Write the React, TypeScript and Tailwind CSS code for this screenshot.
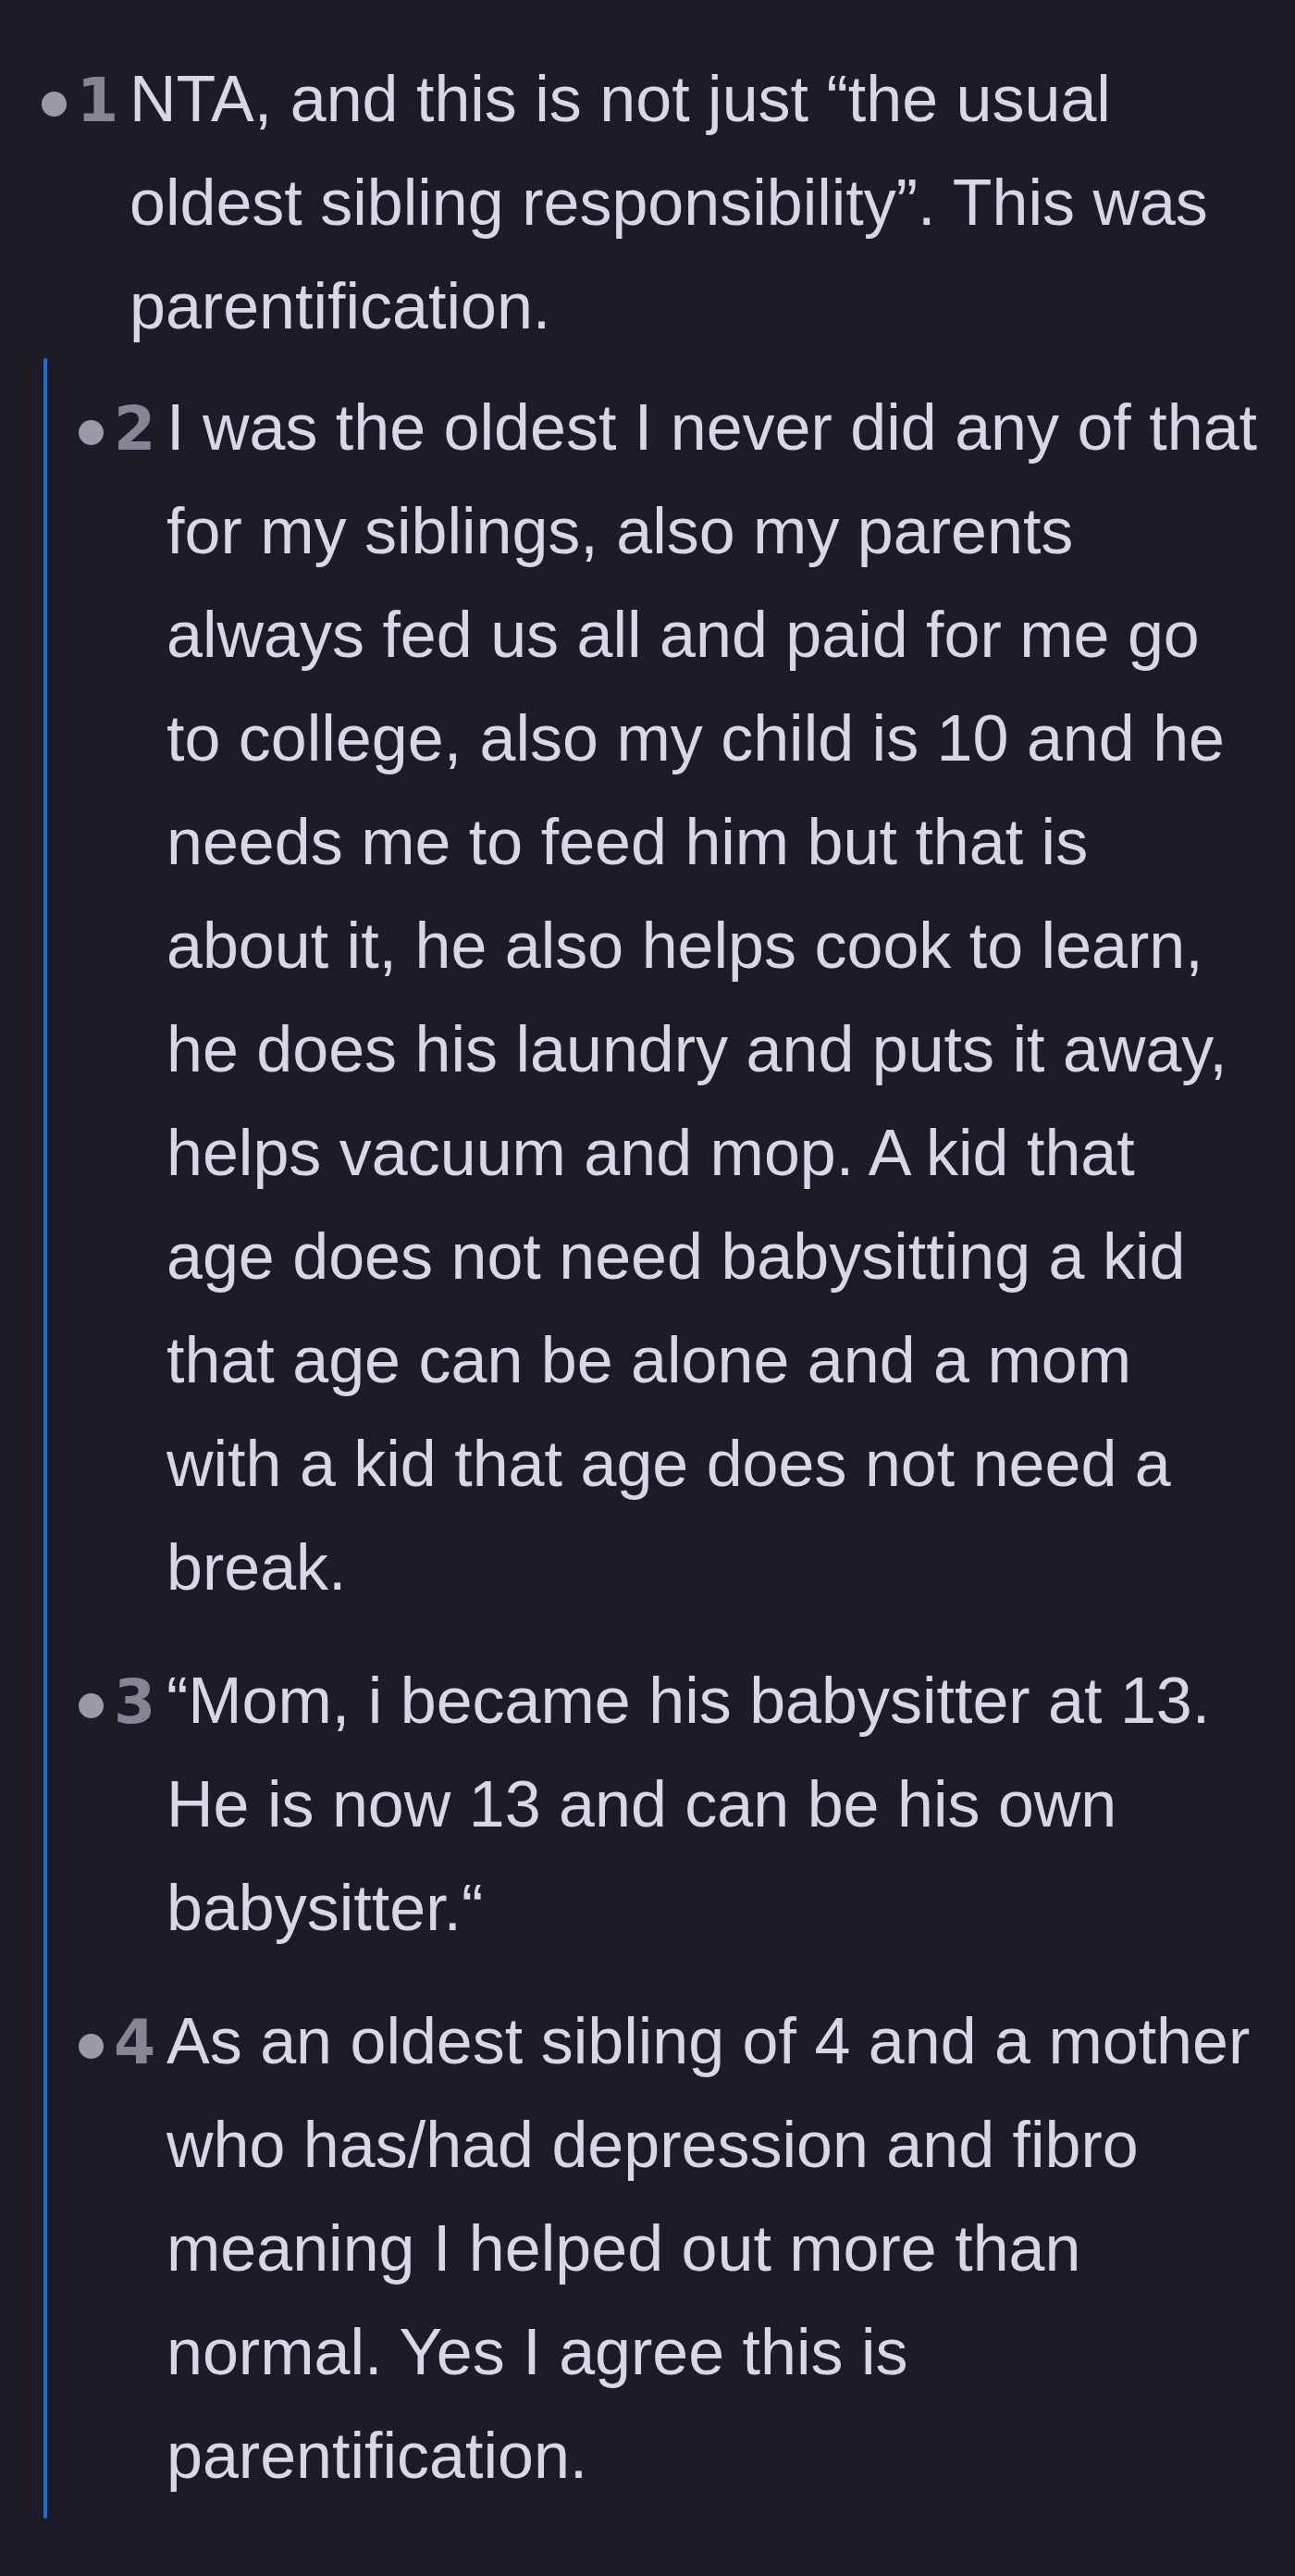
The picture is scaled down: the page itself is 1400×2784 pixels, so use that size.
import React from "react";

type Comment = {
  n: number;
  text: string;
};

const top: Comment = {
  n: 1,
  text: "NTA, and this is not just \u201cthe usual oldest sibling responsibility\u201d. This was parentification.",
};

const replies: Comment[] = [
  {
    n: 2,
    text: "I was the oldest I never did any of that for my siblings, also my parents always fed us all and paid for me go to college, also my child is 10 and he needs me to feed him but that is about it, he also helps cook to learn, he does his laundry and puts it away, helps vacuum and mop. A kid that age does not need babysitting a kid that age can be alone and a mom with a kid that age does not need a break.",
  },
  {
    n: 3,
    text: "\u201cMom, i became his babysitter at 13. He is now 13 and can be his own babysitter.\u201c",
  },
  {
    n: 4,
    text: "As an oldest sibling of 4 and a mother who has/had depression and fibro meaning I helped out more than normal. Yes I agree this is parentification.",
  },
];

const Item = ({ c }: { c: Comment }) => {
  return (
    <div className="flex items-baseline">
      <span className="self-start mt-[48px] w-[27px] h-[27px] shrink-0 rounded-full bg-[#9b99aa]" />
      <span className="ml-[11px] w-[57px] shrink-0 font-['DejaVu_Sans',sans-serif] font-bold text-[65px] leading-[112px] text-[#878595]">
        {c.n}
      </span>
      <p className="text-[70px] leading-[112px] text-[#d9d7e6]">{c.text}</p>
    </div>
  );
};

export default function App() {
  return (
    <div className="min-h-screen bg-[#1c1b26] pt-[51px] pl-[45px] pr-[38.5px] font-['Liberation_Sans',Arial,sans-serif]">
      <Item c={top} />
      <div className="flex pl-[2px]">
        <div className="w-[4px] shrink-0 rounded-full bg-[#1673d3]" />
        <div className="flex flex-col gap-[32px] pl-[34px] pt-[19px] pb-[12px]">
          {replies.map((r) => (
            <Item key={r.n} c={r} />
          ))}
        </div>
      </div>
    </div>
  );
}
